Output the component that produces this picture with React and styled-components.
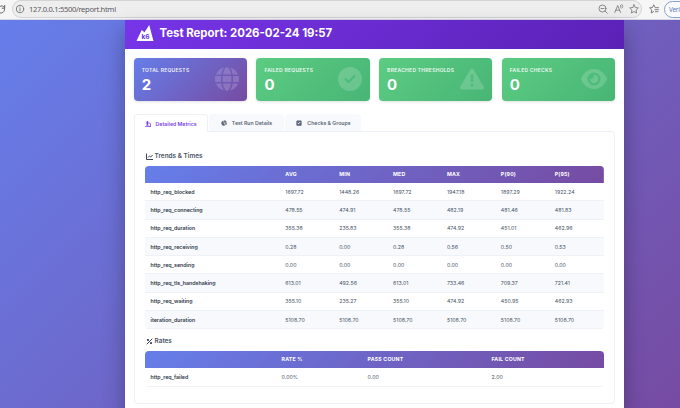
import React from 'react';
import styled, { createGlobalStyle } from 'styled-components';
import {
  FaCircleCheck,
  FaEye,
  FaGlobe,
  FaMicroscope,
  FaSquareCheck,
  FaChartPie,
  FaTriangleExclamation,
} from 'react-icons/fa6';

const GlobalStyle = createGlobalStyle`
  * {
    box-sizing: border-box;
  }
  body {
    margin: 0;
    overflow: hidden;
    font-family: Inter, "Liberation Sans", sans-serif;
    color: #2d3748;
  }
`;

const Window = styled.div`
  display: flex;
  flex-direction: column;
  width: 680px;
  height: 408px;
  overflow: hidden;
`;

const BrowserBar = styled.div`
  display: flex;
  align-items: flex-start;
  flex: none;
  height: 20px;
  background: #f6f6f7;
  border-bottom: 1px solid #d5d6e6;
`;

const Reload = styled.svg`
  flex: none;
  width: 12px;
  height: 18px;
`;

const AddressBar = styled.div`
  display: flex;
  flex: none;
  align-items: center;
  width: 630px;
  height: 18px;
  padding: 0 2px;
  border: 1px solid #d3d3d5;
  border-radius: 9px;
  background: #eeeeef;
`;

const Url = styled.span`
  flex: 1;
  padding-left: 4px;
  font: 7.6px/16px "Noto Sans", "Open Sans", sans-serif;
  letter-spacing: -0.33px;
  color: #5b5b5d;
`;

const BarIcon = styled.svg`
  flex: none;
  width: 10px;
  height: 10px;
  margin-left: ${(props) => props.$gap || 0}px;
  margin-top: ${(props) => props.$top || 0}px;
  fill: none;
  stroke: #737375;
  stroke-linecap: round;
  stroke-linejoin: round;
`;

const Profile = styled.div`
  flex: none;
  width: 44px;
  height: 17px;
  margin-top: 1px;
  margin-left: 5px;
  padding-left: 4px;
  border: 1px solid #87a0d0;
  border-radius: 9px;
  background: #fbfbfd;
  font: 6.3px/15px "Noto Sans", sans-serif;
  letter-spacing: -0.2px;
  color: #5579bd;
`;

const Page = styled.div`
  flex: 1;
  display: flex;
  min-height: 0;
  padding-left: 125px;
  background: linear-gradient(135deg, #667eea 0%, #764ba2 100%);
`;

const Report = styled.div`
  flex: none;
  width: 499px;
  background: white;
  box-shadow: 0 10px 20px rgba(0, 0, 0, 0.3);
`;

const Header = styled.header`
  display: flex;
  align-items: center;
  height: 29px;
  padding: 0 11px 4px;
  background: linear-gradient(135deg, #7735e8 0%, #5b21b6 100%);
`;

const Logo = styled.svg`
  width: 18px;
  height: 16px;
  margin-right: 5.5px;
`;

const Title = styled.h1`
  margin: 0;
  font-size: 11.4px;
  font-weight: 700;
  line-height: 16px;
  color: white;
`;

const Cards = styled.div`
  display: grid;
  grid-template-columns: repeat(4, 1fr);
  gap: 9.5px;
  padding: 9px 9px 0 8.7px;
`;

const Card = styled.div`
  display: flex;
  justify-content: space-between;
  height: 43px;
  padding: 7.5px 8px 0;
  border-radius: 4px;
  background: ${(props) => (props.$main
    ? 'linear-gradient(135deg, #667eea 0%, #764ba2 100%)'
    : 'linear-gradient(135deg, #5ccc82 0%, #48b576 100%)')};
  color: white;
  box-shadow: 0 1px 3px rgba(0, 0, 0, 0.12);

  svg {
    flex: none;
    width: ${(props) => props.$icon || 24}px;
    height: 24px;
    margin-top: 1.5px;
    opacity: 0.17;
  }
`;

const CardText = styled.div`
  width: 0;
  white-space: nowrap;
`;

const CardLabel = styled.div`
  font-size: 5px;
  font-weight: 600;
  line-height: 8px;
  letter-spacing: 0.26px;
  opacity: 0.9;
`;

const CardValue = styled.div`
  margin-top: 2px;
  font-size: 15px;
  font-weight: 700;
  line-height: 17px;
`;

const Tabs = styled.div`
  display: flex;
  gap: 1.7px;
  height: 17px;
  margin: 13px 9px 0 8.6px;
`;

const Tab = styled.div`
  display: flex;
  align-items: center;
  justify-content: center;
  gap: 5px;
  width: ${(props) => props.$width}px;
  height: ${(props) => (props.$active ? 18 : 17)}px;
  border: 1px solid ${(props) => (props.$active ? '#edf0f6' : '#f7f9fc')};
  border-bottom: none;
  border-radius: 4px 4px 0 0;
  background: ${(props) => (props.$active ? 'white' : '#f7f9fc')};
  color: ${(props) => (props.$active ? '#7d3fe8' : '#5c6678')};
  font-size: 5.2px;
  font-weight: 600;
  white-space: nowrap;
`;

const Panel = styled.div`
  height: 273px;
  margin: 0 9px 0 8.6px;
  padding: 19.5px 10px 0;
  border: 1px solid #edf0f6;
  border-radius: 0 4px 4px 4px;
`;

const Section = styled.h3`
  display: flex;
  align-items: center;
  gap: 2px;
  height: 9px;
  margin: 0 0 5px 1px;
  font-size: 6.4px;
  font-weight: 600;
  color: #4a5568;
`;

const SectionIcon = styled.svg`
  width: 7px;
  height: 7px;
  fill: none;
  stroke: #3c4658;
  stroke-width: 1;
`;

const Table = styled.table`
  width: 459px;
  margin-bottom: 7.6px;
  border-collapse: separate;
  border-spacing: 0;
  border-radius: 4px;
  overflow: hidden;
  table-layout: fixed;
  font-size: 5.25px;

  thead tr {
    background: linear-gradient(135deg, #667eea 0%, #764ba2 100%);
  }

  tbody tr:nth-child(even) {
    background: #f7f9fc;
  }
`;

const HeadCell = styled.th`
  width: ${(props) => props.$width}px;
  height: 17.5px;
  padding: 0 6px 1px;
  text-align: left;
  font-weight: 700;
  font-size: 5.2px;
  letter-spacing: 0.2px;
  color: white;
`;

const Cell = styled.td`
  height: 18.3px;
  padding: 0 6px;
  border-bottom: 1px solid #eef1f6;
  color: #4a5568;
`;

const NameCell = styled(Cell)`
  font-weight: 600;
  color: #2d3748;
`;

const trendColumns = ['', 'AVG', 'MIN', 'MED', 'MAX', 'P(90)', 'P(95)'];

const trends = [
  ['http_req_blocked', '1697.72', '1448.26', '1697.72', '1947.18', '1897.29', '1922.24'],
  ['http_req_connecting', '478.55', '474.91', '478.55', '482.19', '481.46', '481.83'],
  ['http_req_duration', '355.38', '235.83', '355.38', '474.92', '451.01', '462.96'],
  ['http_req_receiving', '0.28', '0.00', '0.28', '0.56', '0.50', '0.53'],
  ['http_req_sending', '0.00', '0.00', '0.00', '0.00', '0.00', '0.00'],
  ['http_req_tls_handshaking', '613.01', '492.56', '613.01', '733.46', '709.37', '721.41'],
  ['http_req_waiting', '355.10', '235.27', '355.10', '474.92', '450.95', '462.93'],
  ['iteration_duration', '5108.70', '5108.70', '5108.70', '5108.70', '5108.70', '5108.70'],
];

const rates = [['http_req_failed', '0.00%', '0.00', '2.00']];

const MetricTable = ({ columns, widths, rows }) => (
  <Table>
    <thead>
      <tr>
        {columns.map((column, i) => (
          <HeadCell key={column} $width={widths[i]}>{column}</HeadCell>
        ))}
      </tr>
    </thead>
    <tbody>
      {rows.map(([name, ...values]) => (
        <tr key={name}>
          <NameCell>{name}</NameCell>
          {values.map((value, i) => <Cell key={i}>{value}</Cell>)}
        </tr>
      ))}
    </tbody>
  </Table>
);

const App = () => {
  return (
    <Window>
      <GlobalStyle />
      <BrowserBar>
        <Reload viewBox="0 0 12 18" fill="none" stroke="#666668">
          <path d="M0 6.500c2.500-1.500 5 0 4.500 3.300-.4 2.400-2.400 3.700-4.500 3.100M4.700 5v3.200H1.800" />
        </Reload>
        <AddressBar>
          <BarIcon viewBox="0 0 10 10">
            <circle cx="5" cy="5" r="3.700" strokeWidth=".9" />
            <path d="M5 4.600v2.200M5 3v.1" strokeWidth=".9" />
          </BarIcon>
          <Url>127.0.0.1:5500/report.html</Url>
          <BarIcon viewBox="0 0 10 10">
            <circle cx="4.500" cy="4.500" r="3.500" strokeWidth=".8" />
            <path d="M7 7l2.300 2.300M3 4.500h3" strokeWidth=".8" />
          </BarIcon>
          <BarIcon viewBox="0 0 10 10" $gap={6}>
            <path d="M.8 8.500L3.700 1.500l2.900 7M1.800 6.200h3.700M6.500 1.200q1 1 0 2.200M8 .5q1.800 1.800 0 3.700" strokeWidth=".8" />
          </BarIcon>
          <BarIcon viewBox="0 0 10 10" $gap={5}>
            <path d="M5 .8l1.300 2.700 3 .4L7.100 6l.5 3L5 7.600 2.400 9l.5-3L.7 3.900l3-.4z" strokeWidth=".8" />
          </BarIcon>
        </AddressBar>
        <BarIcon viewBox="0 0 10 10" $gap={7} $top={4}>
          <path d="M6 3.200L4.700.8 3.500 3.500l-2.900.4L2.800 6l-.6 3 2.500-1.400M6.500 3.700h3M6 5.700h3.500M6.500 7.700h2.500" strokeWidth=".9" />
        </BarIcon>
        <Profile>Veri</Profile>
      </BrowserBar>
      <Page>
        <Report>
          <Header>
            <Logo viewBox="0 0 18 17">
              <path d="M0 17L5.500 5.200l3 2.500L13.500 0 18 17z" fill="white" />
              <text x="5.200" y="14.500" fontSize="7" fontWeight="700" fill="#6d30d9">k6</text>
            </Logo>
            <Title>Test Report: 2026-02-24 19:57</Title>
          </Header>
          <Cards>
            <Card $main>
              <CardText>
                <CardLabel>TOTAL REQUESTS</CardLabel>
                <CardValue>2</CardValue>
              </CardText>
              <FaGlobe />
            </Card>
            <Card>
              <CardText>
                <CardLabel>FAILED REQUESTS</CardLabel>
                <CardValue>0</CardValue>
              </CardText>
              <FaCircleCheck />
            </Card>
            <Card>
              <CardText>
                <CardLabel>BREACHED THRESHOLDS</CardLabel>
                <CardValue>0</CardValue>
              </CardText>
              <FaTriangleExclamation />
            </Card>
            <Card $icon={26}>
              <CardText>
                <CardLabel>FAILED CHECKS</CardLabel>
                <CardValue>0</CardValue>
              </CardText>
              <FaEye />
            </Card>
          </Cards>
          <Tabs>
            <Tab $active $width={74}><FaMicroscope size={6} />Detailed Metrics</Tab>
            <Tab $width={74.5}><FaChartPie size={6} />Test Run Details</Tab>
            <Tab $width={76}><FaSquareCheck size={6} />Checks &amp; Groups</Tab>
          </Tabs>
          <Panel>
            <Section>
              <SectionIcon viewBox="0 0 7 7">
                <path d="M.5.5v6H7M2 4.500L3.500 3l1.200 1L6.800 1.800" />
              </SectionIcon>
              Trends &amp; Times
            </Section>
            <MetricTable
              columns={trendColumns}
              widths={[134.7, 53.9, 53.9, 53.9, 53.9, 53.9, 54.8]}
              rows={trends}
            />
            <Section>
              <SectionIcon viewBox="0 0 7 7">
                <path d="M6.300.7L.7 6.300" />
                <path d="M1 1.900h2M4 5.100h2M2 .9v2M5 4.100v2" strokeWidth="1.300" />
              </SectionIcon>
              Rates
            </Section>
            <MetricTable
              columns={['', 'RATE %', 'PASS COUNT', 'FAIL COUNT']}
              widths={[131, 86, 124, 118]}
              rows={rates}
            />
          </Panel>
        </Report>
      </Page>
    </Window>
  );
};

export default App;
